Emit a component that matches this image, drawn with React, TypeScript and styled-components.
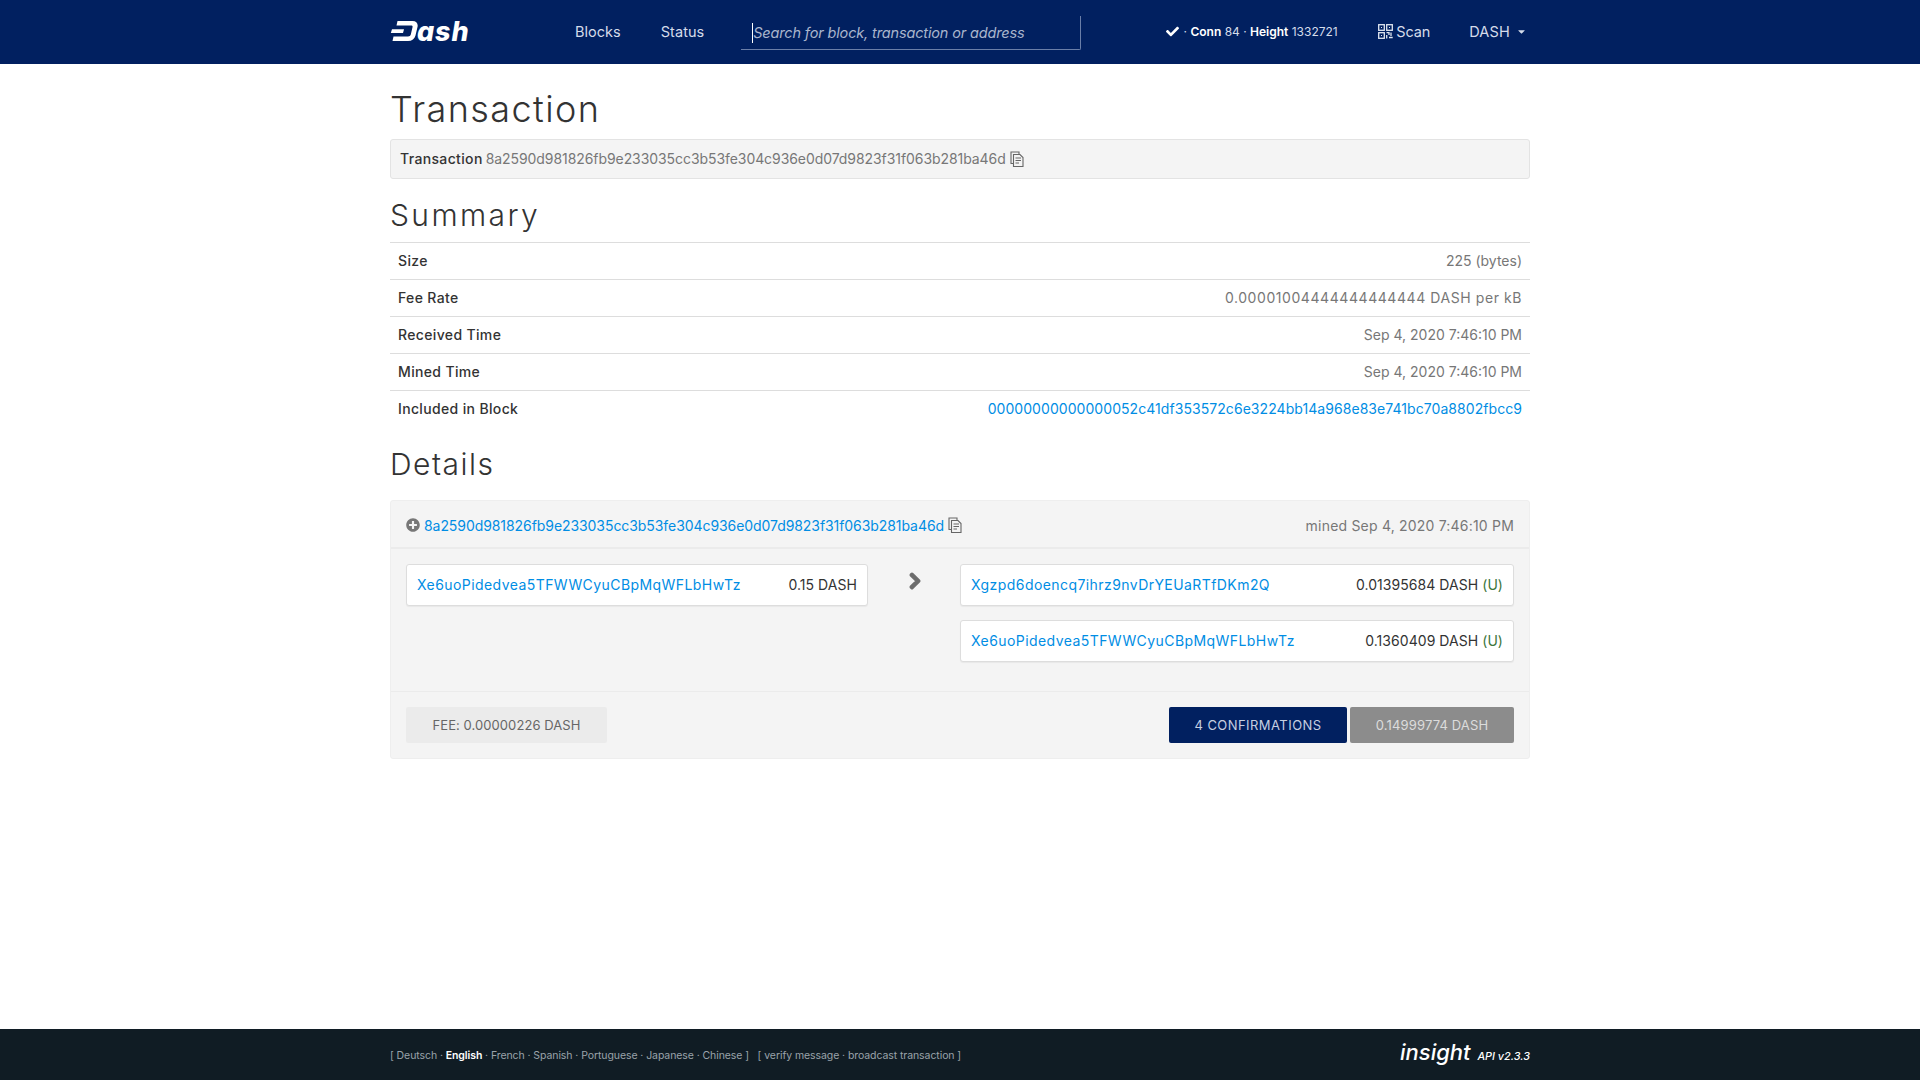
import React from "react";
import styled, { createGlobalStyle } from "styled-components";
import { FaCheck, FaChevronRight, FaPlusCircle, FaCaretDown } from "react-icons/fa";

const Global = createGlobalStyle`
  html, body { margin: 0; padding: 0; background: #fff; height: 100%; }
  body { font-family: Inter, "Liberation Sans", sans-serif; font-size: 14px; color: #333; }
  #root { height: 100%; }
  * { box-sizing: border-box; }
`;

const Page = styled.div`
  min-height: 1080px; display: flex; flex-direction: column;
`;
const NavBar = styled.header`
  height: 64px; background: #012060; display: flex; justify-content: center; flex: none;
`;
const NavInner = styled.div`
  width: 1140px; display: flex; align-items: center; color: #d5dcea; padding-bottom: 2px;
`;
const Logo = styled.div`
  width: 185px; display: flex; align-items: center; color: #fff;
`;
const LogoText = styled.span`
  font: italic 800 27px/1 Inter, sans-serif; letter-spacing: 0.9px; margin-left: -1px;
`;
const NavLink = styled.a`
  font-size: 14.5px; color: #d5dcea; margin-right: 40px; letter-spacing: 0.03px;
`;
const Search = styled.div`
  width: 340px; height: 34px; margin: 0 0 0 -3px; position: relative; top: 2px;
  border-bottom: 1px solid #6a7ea8; border-right: 1px solid #6a7ea8; border-bottom-right-radius: 2px;
  display: flex; align-items: center; padding-left: 11px;
  font-size: 14.5px; font-style: italic; color: #a9b5cd; letter-spacing: -0.15px;
`;
const Caret = styled.span`
  width: 1px; height: 20px; background: #fff; flex: none;
`;
const Status = styled.div`
  margin-left: 85px; display: flex; align-items: center; font-size: 12px; color: #d5dcea; white-space: pre;
  width: 172px;
  & strong { color: #fff; font-weight: 600; }
  & svg { color: #fff; margin-right: 1px; flex: none; }
`;
const Scan = styled.div`
  margin-left: 40px; display: flex; align-items: center; gap: 3px; font-size: 14.5px; width: 91px; letter-spacing: -0.1px;
`;
const Currency = styled.div`
  display: flex; align-items: center; gap: 6px; font-size: 14.5px; letter-spacing: 0.2px;
`;
const Main = styled.main`
  flex: 1; width: 1140px; margin: 0 auto;
`;
const H1 = styled.h1`
  font-size: 36px; font-weight: 300; line-height: 40px; margin: 25px 0 10px; color: #333; letter-spacing: 1.4px;
`;
const Well = styled.div`
  height: 40px; background: #f4f4f4; border: 1px solid #e3e3e3; border-radius: 3px;
  padding: 0 9px 1px; display: flex; align-items: center; gap: 3px; color: #777; white-space: pre;
  & > svg { margin-left: 1px; }
`;
const Strong = styled.strong`
  color: #333; font-weight: 500; letter-spacing: 0.35px;
`;
const Hash = styled.span`
  letter-spacing: -0.07px;
`;
const H2 = styled.h2<{ $ls: number }>`
  font-size: 30px; font-weight: 300; line-height: 34px; margin: 19px 0 10px 0; color: #333; letter-spacing: ${(p) => p.$ls}px;
`;
const Table = styled.div`
  margin-bottom: 20px;
`;
const Row = styled.div`
  height: 37px; border-top: 1px solid #ddd; display: flex; align-items: center; justify-content: space-between;
  padding: 0 8px 1px; color: #777;
`;
const RowValue = styled.span<{ $ls?: number }>`
  letter-spacing: ${(p) => p.$ls ?? 0}px;
`;
const Link = styled.a<{ $ls?: number }>`
  color: #008de4; letter-spacing: ${(p) => p.$ls ?? 0}px;
`;
const TxBlock = styled.section`
  margin-top: 19px; background: #f4f4f4; border: 1px solid #eee; border-radius: 3px; height: 259px;
  display: flex; flex-direction: column;
`;
const TxHead = styled.div`
  height: 48px; flex: none; border-bottom: 2px solid #ebebeb; padding: 2px 15px 0; display: flex; align-items: center; justify-content: space-between; color: #777;
`;
const TxId = styled.div`
  display: flex; align-items: center; gap: 4px;
  & > svg:first-child { color: #777; }
`;
const Mined = styled.span`
  letter-spacing: 0.2px;
`;
const TxBody = styled.div`
  flex: 1; padding: 15px; display: flex;
`;
const Col = styled.div<{ $w: number }>`
  display: flex; flex-direction: column; gap: 14px; flex: none; width: ${(p) => p.$w}px;
`;
const ArrowCol = styled.div`
  width: 92px; flex: none; display: flex; justify-content: center; padding-top: 8px; padding-left: 1px; color: #6d6d6d; font-size: 18px;
  & svg { stroke: currentColor; stroke-width: 50px; }
`;
const AddrBox = styled.div`
  height: 42px; background: #fff; border: 1px solid #ddd; border-radius: 3px; box-shadow: 0 1px 1px rgba(0,0,0,.05);
  display: flex; align-items: center; justify-content: space-between; padding: 0 10px 1px;
`;
const Amount = styled.span`
  color: #333; white-space: pre; letter-spacing: 0.05px;
`;
const Unspent = styled.span`
  color: #3c763d;
`;
const TxFoot = styled.div`
  height: 67px; flex: none; border-top: 1px solid #ebebeb; padding: 15px; display: flex; justify-content: space-between;
`;
const Buttons = styled.div`
  display: flex; gap: 3px;
`;
const Pill = styled.div<{ $bg: string; $fg: string; $w: number; $ls: number }>`
  height: 36px; border-radius: 2px; background: ${(p) => p.$bg}; color: ${(p) => p.$fg}; width: ${(p) => p.$w}px;
  display: flex; align-items: center; justify-content: center; font-size: 13px; letter-spacing: ${(p) => p.$ls}px;
`;
const Footer = styled.footer`
  height: 51px; flex: none; background: #101c24; display: flex; justify-content: center;
`;
const FootInner = styled.div`
  width: 1140px; display: flex; align-items: center; justify-content: space-between; color: #9aa3aa; font-size: 10.5px; white-space: pre; letter-spacing: -0.08px; padding-top: 2px;
  & b { color: #fff; font-weight: 600; }
`;
const Insight = styled.div`
  color: #fff; font-style: italic; font-size: 22px; font-weight: 500; display: flex; align-items: baseline; margin-bottom: 8px; letter-spacing: 0;
  & small { font-size: 10.8px; font-weight: 500; margin-left: 1px; }
`;

const DashD = () => (
  <svg width="28" height="20" viewBox="0 0 28 20" fill="#fff">
    <path d="M7.5 0H22.5C26.5 0 28.3 2.5 27.5 6L25.5 14.5C24.6 18 22 20 18 20H2.5L3.5 15.5H18C19.5 15.5 20.5 14.8 20.8 13.5L22.5 6.2C22.8 5 22.2 4.5 21 4.5H6.5Z" />
    <path d="M2 8.2H14L13 12H0.8Z" />
  </svg>
);

const CopyIcon = () => (
  <svg width="14" height="16" viewBox="0 0 14 16" fill="none" stroke="#666" strokeWidth="1.1">
    <path d="M3 12.5H1V1H9V3" />
    <path d="M3.5 3.5H10L13 6.5V15.5H3.5Z" />
    <path d="M5.5 7H11M5.5 9.5H11M5.5 12H9" />
  </svg>
);

const QrIcon = () => (
  <svg width="15" height="15" viewBox="0 0 15 15" fill="none" stroke="#e0e6f0" strokeWidth="1.3">
    <rect x="0.7" y="0.7" width="5.6" height="5.6" />
    <rect x="8.7" y="0.7" width="5.6" height="5.6" />
    <rect x="0.7" y="8.7" width="5.6" height="5.6" />
    <path d="M8.5 8.7H11V11M13 8.5V12M8.7 11V14.5M11 13.5H14.7" />
    <path d="M3 3h1v1H3zM11 3h1v1h-1zM3 11h1v1H3z" fill="#e0e6f0" stroke="none" />
  </svg>
);

const HASH = "8a2590d981826fb9e233035cc3b53fe304c936e0d07d9823f31f063b281ba46d";
const WHEN = "Sep 4, 2020 7:46:10 PM";

export default function App() {
  return (
    <Page>
      <Global />
      <NavBar>
        <NavInner>
          <Logo>
            <DashD />
            <LogoText>ash</LogoText>
          </Logo>
          <NavLink>Blocks</NavLink>
          <NavLink>Status</NavLink>
          <Search><Caret />Search for block, transaction or address</Search>
          <Status><FaCheck size={13} /> · <strong>Conn</strong> 84 · <strong>Height</strong> 1332721</Status>
          <Scan><QrIcon />Scan</Scan>
          <Currency>DASH <FaCaretDown size={11} /></Currency>
        </NavInner>
      </NavBar>
      <Main>
        <H1>Transaction</H1>
        <Well><Strong>Transaction</Strong><Hash>{HASH}</Hash><CopyIcon /></Well>
        <H2 $ls={2.4}>Summary</H2>
        <Table>
          <Row><Strong>Size</Strong><RowValue>225 (bytes)</RowValue></Row>
          <Row><Strong>Fee Rate</Strong><RowValue $ls={0.57}>0.00001004444444444444 DASH per kB</RowValue></Row>
          <Row><Strong>Received Time</Strong><RowValue>{WHEN}</RowValue></Row>
          <Row><Strong>Mined Time</Strong><RowValue>{WHEN}</RowValue></Row>
          <Row><Strong>Included in Block</Strong><Link $ls={0.06}>00000000000000052c41df353572c6e3224bb14a968e83e741bc70a8802fbcc9</Link></Row>
        </Table>
        <H2 $ls={1.5}>Details</H2>
        <TxBlock>
          <TxHead>
            <TxId><FaPlusCircle size={14} /><Link><Hash>{HASH}</Hash></Link><CopyIcon /></TxId>
            <Mined>mined {WHEN}</Mined>
          </TxHead>
          <TxBody>
            <Col $w={462}>
              <AddrBox><Link $ls={0.43}>Xe6uoPidedvea5TFWWCyuCBpMqWFLbHwTz</Link><Amount>0.15 DASH</Amount></AddrBox>
            </Col>
            <ArrowCol><FaChevronRight /></ArrowCol>
            <Col $w={554}>
              <AddrBox><Link $ls={0.43}>Xgzpd6doencq7ihrz9nvDrYEUaRTfDKm2Q</Link><Amount>0.01395684 DASH <Unspent>(U)</Unspent></Amount></AddrBox>
              <AddrBox><Link $ls={0.43}>Xe6uoPidedvea5TFWWCyuCBpMqWFLbHwTz</Link><Amount>0.1360409 DASH <Unspent>(U)</Unspent></Amount></AddrBox>
            </Col>
          </TxBody>
          <TxFoot>
            <Pill $bg="#ebebeb" $fg="#666" $w={201} $ls={0.07}>FEE: 0.00000226 DASH</Pill>
            <Buttons>
              <Pill $bg="#012060" $fg="#c6cfe0" $w={178} $ls={0.45}>4 CONFIRMATIONS</Pill>
              <Pill $bg="#8c8c8c" $fg="#dcdcdc" $w={164} $ls={0.15}>0.14999774 DASH</Pill>
            </Buttons>
          </TxFoot>
        </TxBlock>
      </Main>
      <Footer>
        <FootInner>
          <span>[ Deutsch · <b>English</b> · French · Spanish · Portuguese · Japanese · Chinese ]   [ verify message · broadcast transaction ]</span>
          <Insight>insight <small>API v2.3.3</small></Insight>
        </FootInner>
      </Footer>
    </Page>
  );
}
